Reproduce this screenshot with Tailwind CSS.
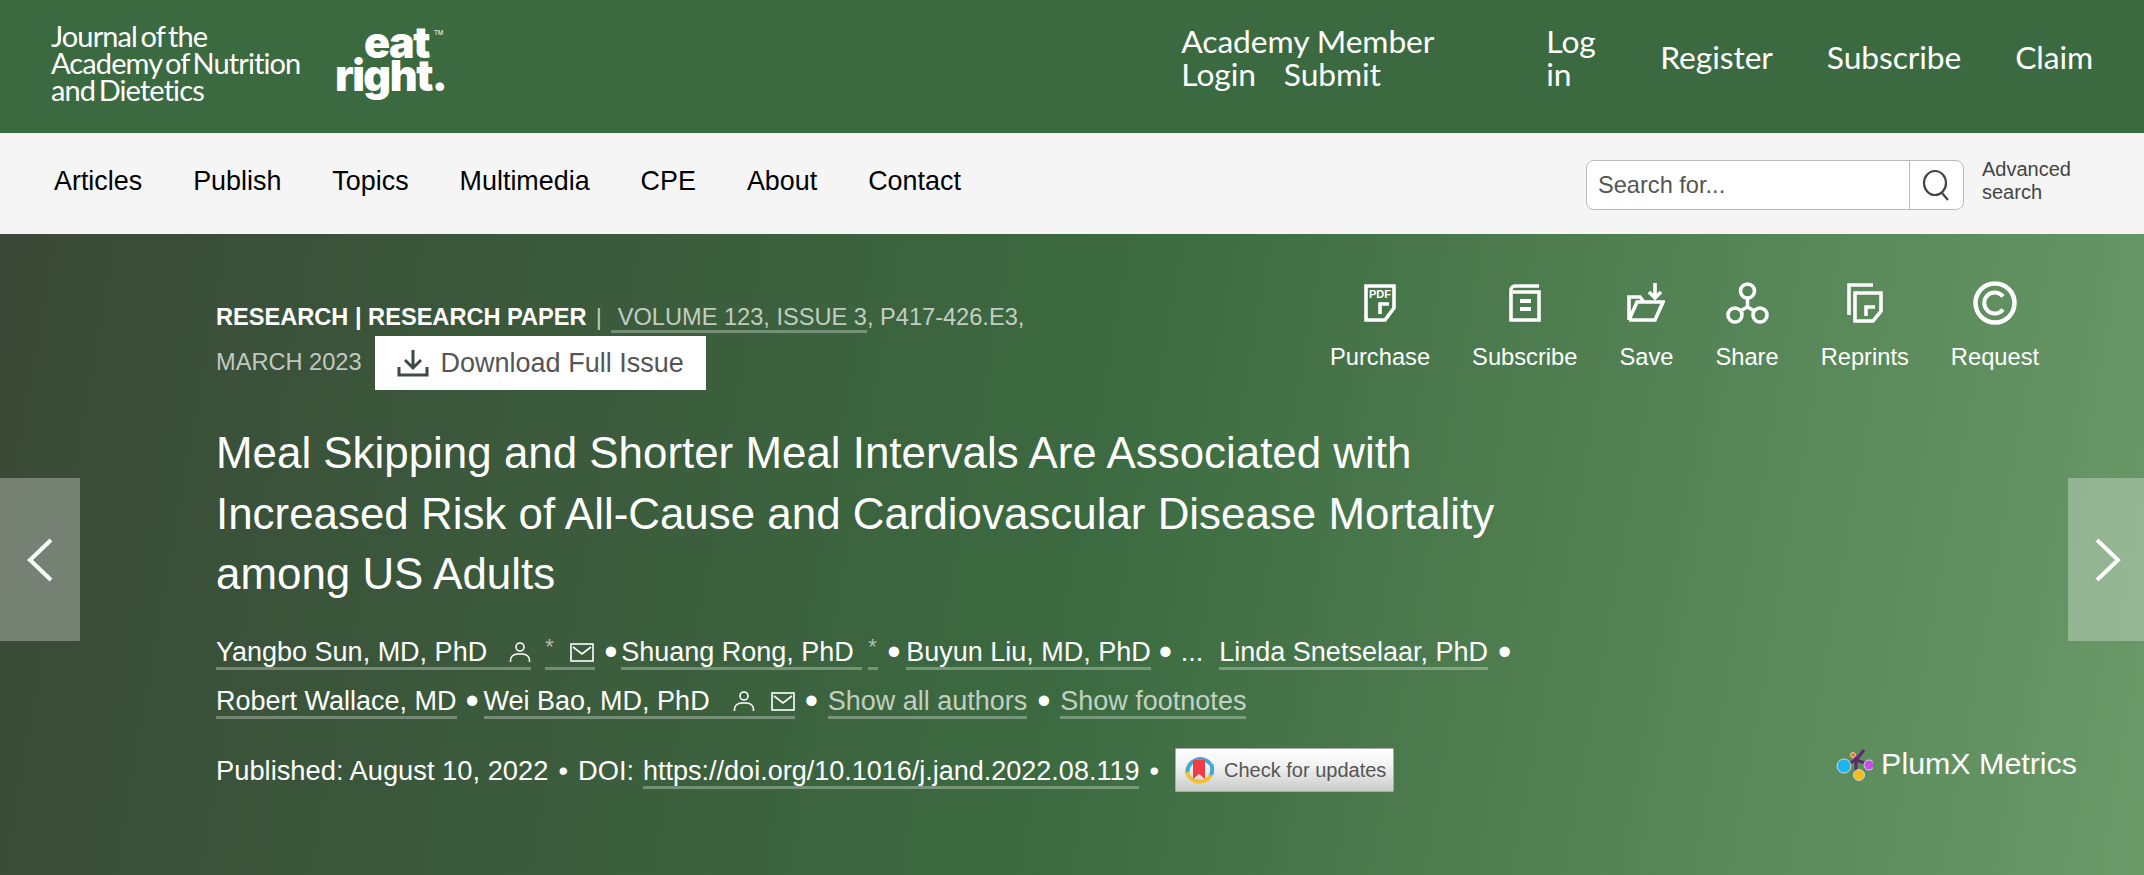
<!DOCTYPE html>
<html lang="en">
<head>
<meta charset="utf-8">
<title>Meal Skipping</title>
<script src="https://cdn.jsdelivr.net/npm/@tailwindcss/browser@4"></script>
</head>
<body class="w-[2144px] h-[875px] overflow-hidden font-['Liberation_Sans',Arial,sans-serif]">
<header class="h-[133px] bg-[#3c6a40] flex items-start text-white font-['Lato',sans-serif]">
  <a class="ml-[51px] mt-[22px] w-[260px] text-[29px] leading-[27px] tracking-[-0.9px] [word-spacing:-3px] font-normal">Journal of the<br>Academy of Nutrition<br>and Dietetics</a>
  <div class="ml-[24px] mt-[26px] w-[115px] h-[72px] font-['Inter',sans-serif] font-black relative text-[43px] leading-[33px] tracking-[-1.5px]">
    <div class="pl-[29px]">eat<span class="absolute left-[99px] top-[3px] text-[6px] leading-[8px] tracking-normal font-normal">TM</span></div>
    <div class="">right.</div>
  </div>
  <nav class="ml-auto flex items-start text-[31.8px] leading-[33px] font-normal tracking-[-0.1px]">
    <a class="mt-[25px] w-[276px] block">Academy Member<br>Login<span class="ml-[28px]">Submit</span></a>
    <a class="mt-[25px] ml-[89px] w-[60px] block">Log<br>in</a>
    <a class="mt-[41px] ml-[54px]">Register</a>
    <a class="mt-[41px] ml-[54px]">Subscribe</a>
    <a class="mt-[41px] ml-[54px] mr-[51px]">Claim</a>
  </nav>
</header>
<div class="h-[101px] bg-[#f5f5f5] flex items-start text-black">
  <nav class="flex ml-[54px] mt-[30px] gap-[51px] text-[26.9px] leading-[36px]">
    <a>Articles</a><a>Publish</a><a>Topics</a><a>Multimedia</a><a>CPE</a><a>About</a><a>Contact</a>
  </nav>
  <form class="ml-auto mt-[27px] h-[50px] w-[378px] bg-white border border-[#bbb] rounded-[8px] flex items-stretch">
    <span class="flex-1 pl-[11px] text-[23.6px] leading-[48px] text-[#555]">Search for...</span>
    <span class="w-[54px] border-l border-[#bbb] flex items-center justify-center">
      <svg width="32" height="32" viewBox="0 0 32 32" fill="none" stroke="#444" stroke-width="2.2"><ellipse cx="14" cy="14" rx="11" ry="12"/><path d="M21 24l6 7"/></svg>
    </span>
  </form>
  <a class="ml-[18px] mr-[62px] w-[100px] mt-[25px] text-[20px] leading-[23px] text-[#444]">Advanced search</a>
</div>
<main class="relative h-[641px] bg-[linear-gradient(100deg,#3a4937_0%,#3c6a40_50%,#6a9a68_100%)] text-white pl-[216px]">
  <div class="flex items-start h-[189px]">
    <div class="w-[830px] pt-[65px] text-[23.6px]">
      <div class="h-[36px] leading-[36px] flex">
        <b class="font-bold">RESEARCH | RESEARCH PAPER</b>
        <span class="ml-[9px] text-white/70">|</span>
        <span class="ml-[9px] h-[34px] pl-[7px] border-b-[3px] border-white/30 text-white/70">VOLUME 123, ISSUE 3</span>
        <span class="text-white/70">, P417-426.E3,</span>
      </div>
      <div class="flex items-center h-[54px] mt-[1px]">
        <span class="text-white/70">MARCH 2023</span>
        <a class="ml-[13px] h-[54px] w-[331px] bg-white flex items-center pl-[22px] text-[27px] text-[#555]">
          <svg width="32" height="28" viewBox="0 0 32 28" fill="none" stroke="#3f4a40" stroke-width="3"><path d="M16 1v17M8 11l8 8 8-8"/><path d="M2 18v8h28v-8"/></svg>
          <span class="ml-[12px]">Download Full Issue</span>
        </a>
      </div>
    </div>
    <div class="ml-[284px] pt-[49px] flex items-start text-[23.7px] leading-[30px] gap-[42px]">
      <a class="flex flex-col items-center">
        <span class="h-[40px] flex items-center relative">
          <svg width="32" height="38" viewBox="0 0 32 38" fill="none" stroke="#fff" stroke-width="3.6"><path d="M2 2h28v22l-9 12H2zM2 2"/><path d="M16 30V20h9"/></svg>
          <span class="absolute left-[2px] top-[4px] w-[28px] text-center text-[11px] leading-[14px] font-bold">PDF</span>
        </span>
        <span class="mt-[19px]">Purchase</span>
      </a>
      <a class="flex flex-col items-center">
        <span class="h-[40px] flex items-center">
          <svg width="32" height="38" viewBox="0 0 32 38" fill="none" stroke="#fff" stroke-width="3.6"><path d="M30 2H6a4 4 0 0 0-4 4v30h28V8H4"/><path d="M11 17h11M11 25h11" stroke-width="4"/></svg>
        </span>
        <span class="mt-[19px]">Subscribe</span>
      </a>
      <a class="flex flex-col items-center">
        <span class="h-[40px] flex items-center">
          <svg width="38" height="40" viewBox="0 0 38 40" fill="none" stroke="#fff" stroke-width="3.6"><path d="M28 0v14M22 9l6 6 6-6"/><path d="M2 37V14h11l4 5h8M2 37h26l8-18H10L2 37"/></svg>
        </span>
        <span class="mt-[19px]">Save</span>
      </a>
      <a class="flex flex-col items-center">
        <span class="h-[40px] flex items-center">
          <svg width="43" height="42" viewBox="0 0 43 42" fill="none" stroke="#fff" stroke-width="3.6"><circle cx="21.5" cy="9" r="7"/><circle cx="9" cy="33" r="7"/><circle cx="34" cy="33" r="7"/><path d="M21.5 16v9M21.5 25L14 29M21.5 25l7 4"/></svg>
        </span>
        <span class="mt-[19px]">Share</span>
      </a>
      <a class="flex flex-col items-center">
        <span class="h-[40px] flex items-center">
          <svg width="36" height="40" viewBox="0 0 36 40" fill="none" stroke="#fff" stroke-width="3.6"><path d="M26 2H2v30"/><path d="M8 10h26v18l-8 10H8z"/><path d="M19 33V24h9" /></svg>
        </span>
        <span class="mt-[19px]">Reprints</span>
      </a>
      <a class="flex flex-col items-center">
        <span class="h-[40px] flex items-center">
          <svg width="44" height="44" viewBox="0 0 44 44" fill="none" stroke="#fff"><circle cx="22" cy="22" r="19.5" stroke-width="4.5"/><path d="M30 15.5a10.5 10.5 0 1 0 0 13" stroke-width="4"/></svg>
        </span>
        <span class="mt-[19px]">Request</span>
      </a>
    </div>
  </div>
  <h1 class="text-[43.9px] leading-[60.6px] w-[1300px] font-normal">Meal Skipping and Shorter Meal Intervals Are Associated with Increased Risk of All-Cause and Cardiovascular Disease Mortality among US Adults</h1>
  <div class="mt-[23px] text-[27px] leading-[48px]">
    <div class="flex h-[49px] items-start">
      <a class="h-[42px] border-b-[3px] border-white/30 flex items-start">Yangbo Sun, MD, PhD
        <svg class="ml-[22px] mt-[13px]" width="22" height="22" viewBox="0 0 22 22" fill="none" stroke="#fff" stroke-width="1.6"><circle cx="11" cy="6" r="4"/><path d="M1.5 21v-2a7 6 0 0 1 7-6h5a7 6 0 0 1 7 6v2"/></svg>
      </a>
      <a class="ml-[14px] h-[42px] w-[50px] border-b-[3px] border-white/30 flex items-start text-white/60 text-[22px]"><span class="leading-[38px]">*</span>
        <svg class="ml-[16px] mt-[15px]" width="24" height="19" viewBox="0 0 24 19" fill="none" stroke="#fff" stroke-width="1.6"><rect x="1" y="1" width="22" height="17"/><path d="M3 4l9 7 9-7"/></svg>
      </a>
      <span class="ml-[9px] w-[12px] text-center text-[38px]">•</span>
      <a class="ml-[5px] h-[42px] w-[241px] border-b-[3px] border-white/30">Shuang Rong, PhD</a>
      <a class="ml-[6px] h-[42px] w-[10px] border-b-[3px] border-white/30 text-white/60 text-[22px] leading-[38px]">*</a>
      <span class="ml-[9px] w-[12px] text-center text-[38px]">•</span>
      <a class="ml-[7px] h-[42px] border-b-[3px] border-white/30">Buyun Liu, MD, PhD</a>
      <span class="ml-[8px] w-[12px] text-center text-[38px]">•</span>
      <span class="ml-[10px]">...</span>
      <a class="ml-[16px] h-[42px] border-b-[3px] border-white/30">Linda Snetselaar, PhD</a>
      <span class="ml-[10px] w-[12px] text-center text-[38px]">•</span>
    </div>
    <div class="flex h-[49px] items-start">
      <a class="h-[42px] border-b-[3px] border-white/30">Robert Wallace, MD</a>
      <span class="ml-[9px] w-[12px] text-center text-[38px]">•</span>
      <a class="ml-[6px] h-[42px] border-b-[3px] border-white/30 flex items-start">Wei Bao, MD, PhD
        <svg class="ml-[23px] mt-[13px]" width="22" height="22" viewBox="0 0 22 22" fill="none" stroke="#fff" stroke-width="1.6"><circle cx="11" cy="6" r="4"/><path d="M1.5 21v-2a7 6 0 0 1 7-6h5a7 6 0 0 1 7 6v2"/></svg>
        <svg class="ml-[16px] mt-[15px]" width="24" height="19" viewBox="0 0 24 19" fill="none" stroke="#fff" stroke-width="1.6"><rect x="1" y="1" width="22" height="17"/><path d="M3 4l9 7 9-7"/></svg>
      </a>
      <span class="ml-[10px] w-[12px] text-center text-[38px]">•</span>
      <a class="ml-[11px] h-[42px] border-b-[3px] border-white/30 text-white/70">Show all authors</a>
      <span class="ml-[10px] w-[12px] text-center text-[38px]">•</span>
      <a class="ml-[11px] h-[42px] border-b-[3px] border-white/30 text-white/70">Show footnotes</a>
    </div>
  </div>
  <div class="mt-[23px] flex items-start h-[44px] text-[27.3px] leading-[44px]">
    <span>Published: August 10, 2022</span>
    <span class="ml-[10px]">•</span>
    <span class="ml-[10px]">DOI:</span>
    <a class="ml-[9px] h-[40px] border-b-[3px] border-white/30 text-[27px]">https://doi.org/10.1016/j.jand.2022.08.119</a>
    <span class="ml-[10px]">•</span>
    <a class="ml-[16px] mt-[-1px] w-[219px] h-[44px] border border-[#aaa] bg-[linear-gradient(180deg,#fff_0%,#f2f2f2_40%,#c9cbc9_100%)] flex items-center pl-[8px] text-[20px] text-[#555] rounded-[1px]">
      <svg width="30" height="32" viewBox="0 0 30 32" fill="none" class="shrink-0"><path d="M3.5 20A13 13 0 0 1 26.5 10" stroke="#3fa9d0" stroke-width="4"/><path d="M3 18A13 13 0 0 0 27 21" stroke="#f0c230" stroke-width="4"/><path d="M27 10A13 13 0 0 1 27 21" stroke="#3fa9d0" stroke-width="4"/><path d="M9 6h12v19l-6-5-6 5z" fill="#ef3c46"/></svg>
      <span class="ml-[10px] whitespace-nowrap">Check for updates</span>
    </a>
    <a class="ml-auto mr-[67px] mt-[-8px] flex items-center text-[30.4px]">
      <svg width="38" height="36" viewBox="0 0 38 36" class="mr-[8px] mt-[3px]" fill="none"><path d="M10 19L21 14M21 14L29 4M21 14L18 6M21 14L21 26M21 14L33 18" stroke="#5b2a6b" stroke-width="3"/><circle cx="9" cy="20" r="7" fill="#1eb4ee" stroke="#cfd8dc"/><circle cx="24" cy="29" r="5.5" fill="#f4bc1c" stroke="#cfd8dc"/><circle cx="34" cy="19" r="5" fill="#c44fe4" stroke="#cfd8dc"/><circle cx="18" cy="9" r="2.5" fill="#e8703a" stroke="#f2d9a0"/></svg>
      PlumX Metrics
    </a>
  </div>
  <a class="absolute left-0 top-[244px] w-[80px] h-[163px] bg-white/30 flex items-center justify-center">
    <svg width="30" height="46" viewBox="0 0 30 46" fill="none" stroke="#fff" stroke-width="4" class="ml-[1px]"><path d="M25 3L4 23l21 20"/></svg>
  </a>
  <a class="absolute right-0 top-[244px] w-[76px] h-[163px] bg-white/30 flex items-center justify-center">
    <svg width="30" height="46" viewBox="0 0 30 46" fill="none" stroke="#fff" stroke-width="4" class="ml-[3px]"><path d="M4 3l21 20L4 43"/></svg>
  </a>
</main>
</body>
</html>
